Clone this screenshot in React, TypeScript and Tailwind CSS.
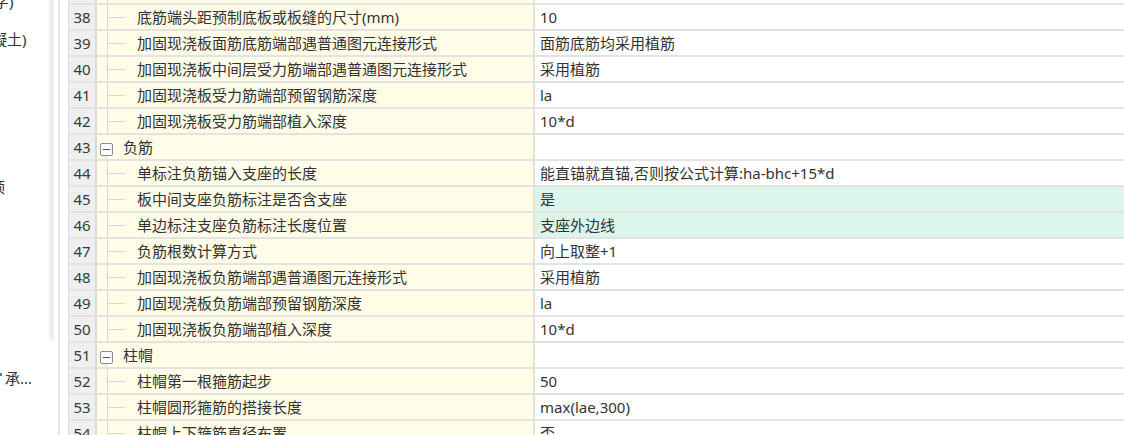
import React from 'react';

type Row = {
    no: number;
    name: string;
    value?: string;
    group?: boolean;
    green?: boolean;
};

const rows: Row[] = [
    { no: 37, name: '加固现浇板底筋端部植入深度', value: '10*d' },
    { no: 38, name: '底筋端头距预制底板或板缝的尺寸(mm)', value: '10' },
    { no: 39, name: '加固现浇板面筋底筋端部遇普通图元连接形式', value: '面筋底筋均采用植筋' },
    { no: 40, name: '加固现浇板中间层受力筋端部遇普通图元连接形式', value: '采用植筋' },
    { no: 41, name: '加固现浇板受力筋端部预留钢筋深度', value: 'la' },
    { no: 42, name: '加固现浇板受力筋端部植入深度', value: '10*d' },
    { no: 43, name: '负筋', group: true },
    { no: 44, name: '单标注负筋锚入支座的长度', value: '能直锚就直锚,否则按公式计算:ha-bhc+15*d' },
    { no: 45, name: '板中间支座负筋标注是否含支座', value: '是', green: true },
    { no: 46, name: '单边标注支座负筋标注长度位置', value: '支座外边线', green: true },
    { no: 47, name: '负筋根数计算方式', value: '向上取整+1' },
    { no: 48, name: '加固现浇板负筋端部遇普通图元连接形式', value: '采用植筋' },
    { no: 49, name: '加固现浇板负筋端部预留钢筋深度', value: 'la' },
    { no: 50, name: '加固现浇板负筋端部植入深度', value: '10*d' },
    { no: 51, name: '柱帽', group: true },
    { no: 52, name: '柱帽第一根箍筋起步', value: '50' },
    { no: 53, name: '柱帽圆形箍筋的搭接长度', value: 'max(lae,300)' },
    { no: 54, name: '柱帽上下箍筋直径布置', value: '否' },
];

function NameCell({ row }: { row: Row }) {
    if (row.group) {
        return (
            <div className="flex h-full">
                <div className="ml-[3px] flex w-[13px] flex-col items-center">
                    <div className="h-[8px]" />
                    <div className="flex h-[13px] w-[13px] items-center justify-center rounded-[2px] border border-[#8c8c8c] bg-white">
                        <div className="h-px w-[7px] bg-[#555]" />
                    </div>
                    <div className="w-px flex-1 bg-[#d8d8d8]" />
                </div>
                <div className="ml-[10px] flex items-center">{row.name}</div>
            </div>
        );
    }
    return (
        <div className="flex h-full">
            <div className="w-[10px]" />
            <div className="flex w-[18px] items-center border-l border-[#d8d8d8]">
                <div className="h-px w-full bg-[#d8d8d8]" />
            </div>
            <div className="ml-[12px] flex items-center whitespace-nowrap">{row.name}</div>
        </div>
    );
}

export default function App() {
    return (
        <div
            className="flex h-[435px] w-[1124px] overflow-hidden bg-white text-[15px] text-[#333]"
            style={{ fontFamily: '"Noto Sans", "Noto Sans CJK SC", sans-serif' }}
        >
            {/* left tree panel, scrolled so its texts are clipped */}
            <div className="flex w-[55px] shrink-0 overflow-hidden">
                <div className="flex w-[49px] flex-col overflow-hidden">
                    <div className="-mt-[9px] -ml-[6px] h-[20px] leading-[20px] whitespace-nowrap">字)</div>
                    <div className="mt-[18px] -ml-[8px] h-[20px] leading-[20px] whitespace-nowrap">凝土)</div>
                    <div className="mt-[128px] -ml-[10px] h-[20px] leading-[20px]">顶</div>
                    <div className="mt-[171px] flex h-[20px] items-center whitespace-nowrap">
                        <div className="mr-[3px] -mt-[8px] h-[3px] w-[2px] bg-[#3b7dd8]" />
                        <span>承...</span>
                    </div>
                </div>
                <div className="h-[340px] w-[5px] rounded-b-[3px] bg-[#eeeeee]" />
            </div>
            <div className="w-[3px] shrink-0" />
            <div className="w-[2px] shrink-0 bg-[#e4e4e4]" />
            <div className="w-[8px] shrink-0" />

            {/* property grid */}
            <div className="flex-1 overflow-hidden">
                <div className="-mt-[21px]">
                    {rows.map((row) => (
                        <div key={row.no} className="flex h-[26px] border-b-2 border-[#e3e3e3]">
                            <div className="flex w-[29px] shrink-0 items-center justify-center border-r-2 border-l border-[#dadada] bg-[#efefef] text-[#3a3a3a]">
                                {row.no}
                            </div>
                            <div className="w-[438px] shrink-0 border-r-2 border-[#e6e3d0] bg-[#fffce8]">
                                <NameCell row={row} />
                            </div>
                            <div
                                className={`flex flex-1 items-center whitespace-nowrap pl-[5px] ${
                                    row.green ? 'bg-[#dcf5eb]' : 'bg-white'
                                }`}
                            >
                                {row.value}
                            </div>
                        </div>
                    ))}
                </div>
            </div>
        </div>
    );
}
